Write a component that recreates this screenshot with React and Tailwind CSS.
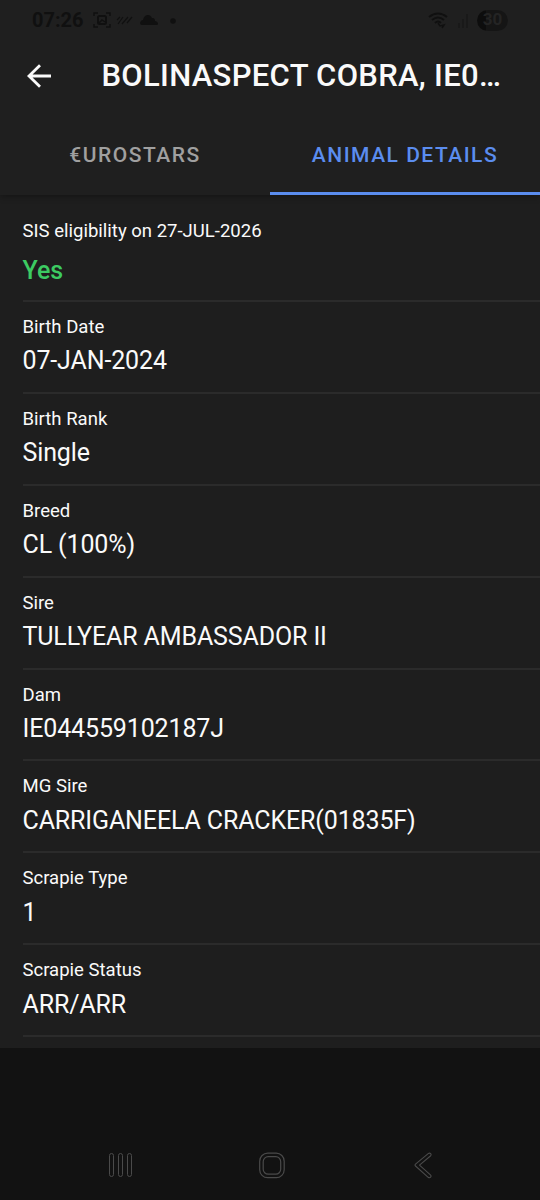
const rows = [
  ['Birth Date', '07-JAN-2024'],
  ['Birth Rank', 'Single'],
  ['Breed', 'CL (100%)'],
  ['Sire', 'TULLYEAR AMBASSADOR II'],
  ['Dam', 'IE044559102187J'],
  ['MG Sire', 'CARRIGANEELA CRACKER(01835F)'],
  ['Scrapie Type', '1'],
  ['Scrapie Status', 'ARR/ARR'],
];

function StatusBar() {
  return (
    <div className="flex h-10 items-center justify-between pr-8 pl-8 text-[#101010]">
      <div className="flex items-center">
        <span className="w-[61px] text-[20px] leading-10 font-bold whitespace-nowrap">07:26</span>
        <svg width="86" height="20" viewBox="93 10 86 20" fill="none" stroke="currentColor" strokeWidth="1.5">
          <path d="M94 16v-3h4M106 13h4v3M94 24v3h4M106 27h4v-3" />
          <rect x="98" y="16" width="8" height="8" rx="1.5" strokeWidth="2" />
          <path d="m99 23 3-3 3 2" />
          <path d="m118 24 5-7M122 24l6-7M127 23l5-6M117 20l3-3" strokeWidth="1.2" />
          <path d="M142 25c-3 0-2-5 1-5 1-4 3-5 5-5s3 1 4 3c3 0 3 2 3 3 3 0 4 4 2 4Z" fill="currentColor" stroke="none" />
          <circle cx="173" cy="21" r="2.8" fill="currentColor" stroke="none" />
        </svg>
      </div>
      <div className="flex items-center gap-[6px]">
        <svg width="44" height="22" viewBox="427 9 44 22" fill="none" stroke="currentColor" strokeWidth="2">
          <path d="M429 17q9-7 18 0M432 20q6-5 12 0M435 23q3-3 6 0" />
          <path d="m438 23 2 3 4-1-2 3" strokeWidth="1.5" />
          <path d="M459 23v5M463 19v9M467 14v14" stroke="#191919" />
        </svg>
        <span className="flex h-[21px] w-[31px] items-center justify-center rounded-full bg-gradient-to-r from-[#0d0d0d] from-30% to-[#151515] to-30% text-[17px] font-bold text-[#242424]">30</span>
      </div>
    </div>
  );
}

function Field({ label, value }) {
  return (
    <div className="flex h-[91.9px] shrink-0 flex-col border-b-2 border-[#2b2b2b] pt-[13px]">
      <span className="text-[18.55px] leading-6">{label}</span>
      <span className="mt-[6.4px] text-[25px] leading-8 tracking-[-0.13px]">{value}</span>
    </div>
  );
}

export default function App() {
  return (
    <div className="flex h-[1200px] w-[540px] flex-col overflow-hidden bg-[#121212] font-[Roboto,sans-serif] text-[#fafafa]">
      <header className="z-10 flex h-[195px] shrink-0 flex-col bg-[#1f1f1f] shadow-[0_2px_6px_rgba(0,0,0,0.3)]">
        <StatusBar />
        <div className="flex h-[72px] items-center">
          <svg className="ml-[26px] shrink-0" width="26" height="26" viewBox="0 0 26 26" fill="none" stroke="currentColor" strokeWidth="2.8">
            <path d="M25 13H3M14 2.2 3 13 14 23.8" />
          </svg>
          <h1 className="ml-[49.5px] text-[31px] leading-10 font-medium tracking-[0.3px] whitespace-nowrap">BOLINASPECT COBRA, IE0…</h1>
        </div>
        <nav className="grid h-[83px] grid-cols-2 text-[21px] font-medium tracking-[1.5px]">
          <div className="flex justify-center text-[#a0a0a0]"><span className="mt-[27px] leading-8">€UROSTARS</span></div>
          <div className="flex justify-center border-b-[3px] border-[#5b8def] text-[#5b8def]"><span className="mt-[27px] leading-8">ANIMAL DETAILS</span></div>
        </nav>
      </header>
      <main className="flex h-[853px] shrink-0 flex-col bg-[#1e1e1e] pl-[22.5px]">
        <div className="flex h-[107px] shrink-0 flex-col border-b-2 border-[#2b2b2b] pt-[24px]">
          <span className="text-[18.55px] leading-6">SIS eligibility on 27-JUL-2026</span>
          <span className="mt-[12px] text-[25px] leading-8 font-medium tracking-[-0.1px] text-[#3ccb62]">Yes</span>
        </div>
        {rows.map(([label, value]) => <Field key={label} label={label} value={value} />)}
      </main>
      <footer className="flex flex-1 items-end pb-5 pl-[108px]">
        <svg width="26" height="30" viewBox="0 0 26 30" fill="none" stroke="#4a4a4a">
          <rect x="1.5" y="3.5" width="4" height="23" rx="2" />
          <rect x="10.5" y="3.5" width="4" height="23" rx="2" />
          <rect x="19.5" y="3.5" width="4" height="23" rx="2" />
        </svg>
        <svg className="ml-[124px]" width="28" height="30" viewBox="0 0 28 30" fill="none" stroke="#4a4a4a" strokeWidth="1.2">
          <rect x="1.7" y="3.2" width="24.5" height="24.5" rx="8" />
          <rect x="5.2" y="6.7" width="17.5" height="17.5" rx="5" />
        </svg>
        <svg className="ml-[128px]" width="20" height="30" viewBox="0 0 20 30" fill="none" stroke="#4a4a4a" strokeWidth="1.1" strokeLinejoin="round">
          <path d="M14.2 3.7 1.5 14.2q-1 .9 0 1.8L14.2 27.3c1.7 1.3 4-.8 2.2-2.5L5.5 15.1 16.4 6c1.8-1.7-.4-3.8-2.2-2.3Z" />
        </svg>
      </footer>
    </div>
  );
}
